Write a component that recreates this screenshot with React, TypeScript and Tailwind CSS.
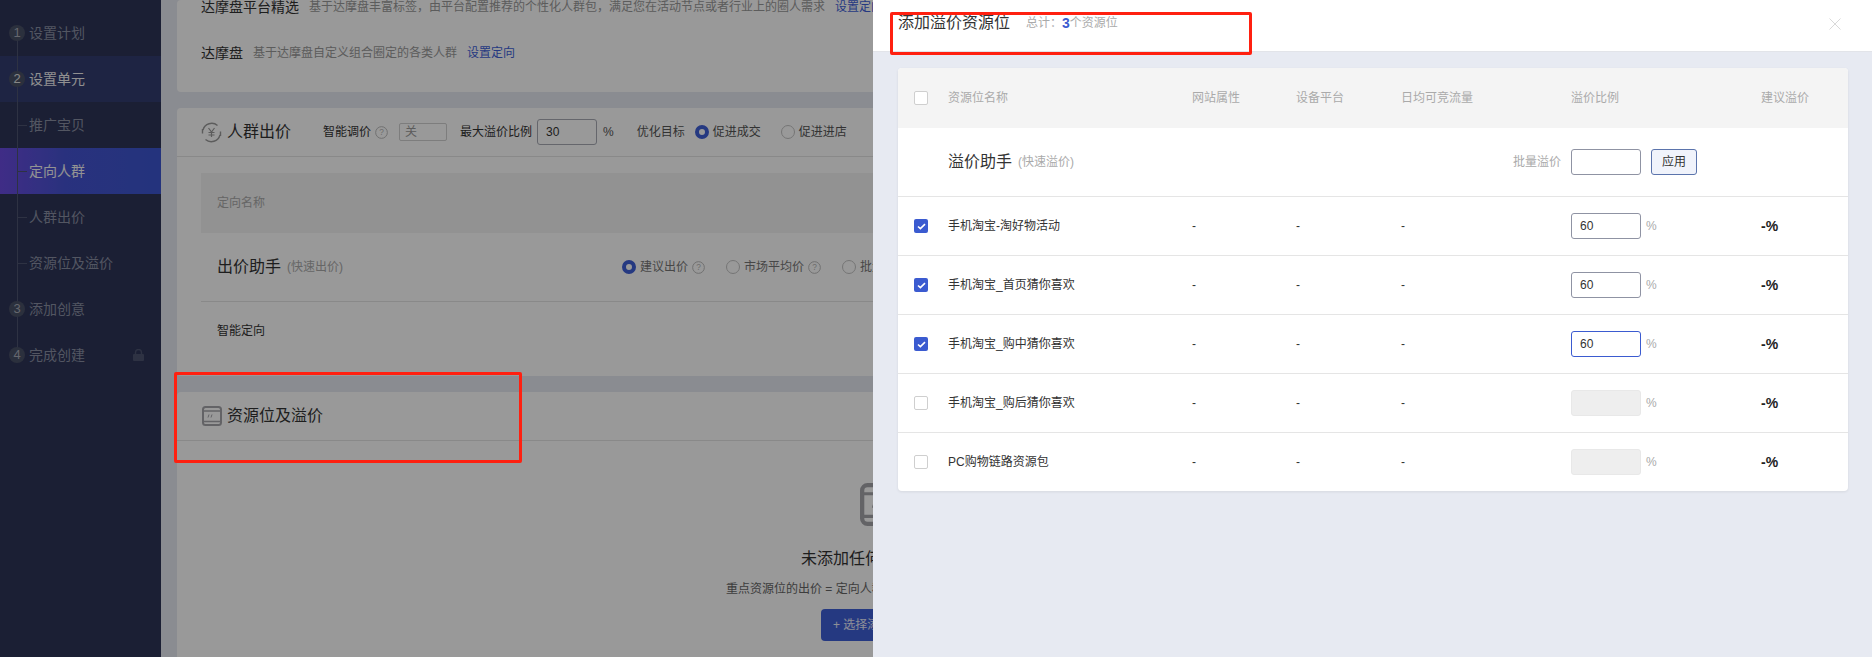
import React from "react";

const Q = ({ s = 13 }: { s?: number }) => (
  <svg width={s} height={s} viewBox="0 0 14 14" fill="none" className="shrink-0">
    <circle cx="7" cy="7" r="6.3" stroke="#b5b5b5" strokeWidth="1" />
    <text x="7" y="10.2" textAnchor="middle" fontSize="9" fill="#b5b5b5" fontFamily="Liberation Sans">?</text>
  </svg>
);

const Radio = ({ on }: { on?: boolean }) =>
  on ? (
    <span className="w-[14px] h-[14px] rounded-full border-[4px] border-[#3f5fd8] bg-white shrink-0" />
  ) : (
    <span className="w-[14px] h-[14px] rounded-full border border-[#c4c4c4] bg-white shrink-0" />
  );

const SlotIcon = ({ s = 20 }: { s?: number }) => (
  <svg width={s} height={s} viewBox="0 0 20 20" fill="none" className="shrink-0">
    <rect x="1" y="1" width="18" height="18" rx="2.5" stroke="#a5a5aa" strokeWidth="2" />
    <path d="M1 5h18M1 15.5h18" stroke="#a5a5aa" strokeWidth="1.5" />
    <path d="M6 11.5l1-3M9 11.5l1-3" stroke="#a5a5aa" strokeWidth="1" />
  </svg>
);

const Check = ({ on }: { on?: boolean }) =>
  on ? (
    <span className="w-[14px] h-[14px] rounded-[2px] bg-[#3b5bd0] flex items-center justify-center">
      <svg width="9" height="7" viewBox="0 0 9 7" fill="none">
        <path d="M1 3.5L3.4 5.6L8 1.2" stroke="white" strokeWidth="1.6" />
      </svg>
    </span>
  ) : (
    <span className="w-[14px] h-[14px] rounded-[2px] border border-[#cfcfcf] bg-white" />
  );

const nav: { n?: string; t: string; kind?: string }[] = [
  { n: "1", t: "设置计划", kind: "dim" },
  { n: "2", t: "设置单元", kind: "cur" },
  { t: "推广宝贝" },
  { t: "定向人群", kind: "active" },
  { t: "人群出价" },
  { t: "资源位及溢价" },
  { n: "3", t: "添加创意" },
  { n: "4", t: "完成创建", kind: "lock" },
];

const Sidebar = () => (
  <aside className="w-[161px] shrink-0 h-full bg-[#2d3557] pt-[10px] relative">
    <div className="absolute left-[17px] top-[33px] h-[322px] w-px bg-[#4d5470] z-10" />
    {nav.map((r) => (
      <div
        key={r.t}
        className={
          "h-[46px] flex items-center text-[14px] relative " +
          (r.kind === "active"
            ? "bg-gradient-to-r from-[#6a4ae0] via-[#4553d2] via-40% to-[#3c56d0] text-[#f5f5f5]"
            : r.kind === "cur"
            ? "bg-[#323c70] text-[#f0f0f0]"
            : "text-[#8a8fa3]")
        }
      >
        {r.n ? (
          <span
            className={
              "absolute left-[9px] z-20 w-[16px] h-[16px] rounded-full bg-[#495066] flex items-center justify-center text-[13px] " +
              (r.kind === "cur" ? "text-[#e0e0e0]" : "text-[#a8acb8]")
            }
          >
            {r.n}
          </span>
        ) : (
          <span className="absolute left-[18px] w-[9px] h-px bg-[#4d5470] z-10" />
        )}
        <span className="ml-[29px]">{r.t}</span>
        {r.kind === "lock" && (
          <svg width="11" height="12" viewBox="0 0 11 12" className="absolute left-[133px] top-[17px]" fill="none">
            <rect x="0" y="5" width="11" height="7" rx="1" fill="#4d5470" />
            <path d="M2.5 5V3.5a3 3 0 016 0V5" stroke="#4d5470" strokeWidth="1.4" />
          </svg>
        )}
      </div>
    ))}
  </aside>
);

const Main = () => (
  <main className="flex-1 min-w-0 h-full bg-[#e7eaf2] pl-[16px] overflow-hidden flex flex-col gap-[16px]">
    <section className="bg-white rounded-[4px] w-[1680px] h-[92px] shrink-0 px-[24px] text-[#333]">
      <div className="h-[14px] flex items-center whitespace-nowrap">
        <span className="text-[14px]">达摩盘平台精选</span>
        <span className="text-[12px] text-[#999] ml-[10px]">基于达摩盘丰富标签，由平台配置推荐的个性化人群包，满足您在活动节点或者行业上的圈人需求</span>
        <span className="text-[12px] text-[#3f5fd8] ml-[10px]">设置定向</span>
      </div>
      <div className="h-[20px] mt-[29px] flex items-center whitespace-nowrap">
        <span className="text-[14px]">达摩盘</span>
        <span className="text-[12px] text-[#999] ml-[10px]">基于达摩盘自定义组合圈定的各类人群</span>
        <span className="text-[12px] text-[#3f5fd8] ml-[10px]">设置定向</span>
      </div>
    </section>

    <section className="bg-white rounded-[4px] w-[1680px] h-[268px] shrink-0 text-[#333]">
      <div className="h-[49px] border-b border-[#e5e5e5] pl-[24px] flex items-center whitespace-nowrap text-[12px]">
        <svg width="21" height="21" viewBox="0 0 21 21" fill="none" className="shrink-0">
          <path d="M16.5 3.5A9 9 0 002 8M4.5 17.5A9 9 0 0019 13" stroke="#999" strokeWidth="1.4" />
          <path d="M1.5 11.5V7M19.5 9.5V14" stroke="#999" strokeWidth="1.4" />
          <path d="M7.5 6l3 4 3-4M7.5 10.5h6M7.5 13h6M10.5 10v5" stroke="#999" strokeWidth="1.2" />
        </svg>
        <span className="text-[16px] ml-[5px] w-[96px]">人群出价</span>
        <span>智能调价</span>
        <span className="ml-[4px]"><Q /></span>
        <span className="ml-[11px] w-[48px] h-[18px] border border-[#d0d0d0] rounded-[2px] pl-[5px] leading-[16px] text-[#999]">关</span>
        <span className="ml-[13px]">最大溢价比例</span>
        <span className="ml-[5px] w-[60px] h-[26px] border border-[#a8abb5] rounded-[3px] pl-[8px] leading-[24px]">30</span>
        <span className="ml-[6px] text-[#555]">%</span>
        <span className="ml-[23px] text-[#555]">优化目标</span>
        <span className="ml-[10px] flex items-center gap-[4px] text-[#555]"><Radio on />促进成交</span>
        <span className="ml-[20px] flex items-center gap-[4px] text-[#555]"><Radio />促进进店</span>
      </div>
      <div className="px-[24px] pt-[16px]">
        <div className="h-[60px] bg-[#f3f3f3] pl-[16px] flex items-center text-[12px] text-[#aaa]">定向名称</div>
        <div className="h-[69px] border-b border-[#e5e5e5] pl-[16px] flex items-center whitespace-nowrap">
          <span className="text-[16px]">出价助手</span>
          <span className="text-[12px] text-[#aaa] ml-[6px]">(快速出价)</span>
          <span className="ml-[279px] flex items-center gap-[4px] text-[12px] text-[#777]"><Radio on />建议出价<Q /></span>
          <span className="ml-[21px] flex items-center gap-[4px] text-[12px] text-[#777]"><Radio />市场平均价<Q /></span>
          <span className="ml-[21px] flex items-center gap-[4px] text-[12px] text-[#777]"><Radio />批量出价</span>
        </div>
        <div className="h-[58px] pl-[16px] flex items-center text-[12px]">智能定向</div>
      </div>
    </section>

    <section className="bg-white rounded-[4px] w-[1680px] h-[300px] shrink-0 text-[#333]">
      <div className="h-[49px] border-b border-[#e5e5e5] pl-[25px] flex items-center">
        <SlotIcon />
        <span className="text-[16px] ml-[5px]">资源位及溢价</span>
      </div>
      <div className="pl-[683px] pt-[42px]"><SlotIcon s={43} /></div>
      <div className="pl-[624px] mt-[21px] text-[16px] whitespace-nowrap">未添加任何资源位</div>
      <div className="pl-[549px] mt-[9px] text-[12px] text-[#666] whitespace-nowrap">重点资源位的出价 = 定向人群出价 × (1 + 资源位溢价)</div>
      <div className="pl-[644px] mt-[11px]">
        <span className="inline-flex items-center h-[32px] px-[12px] rounded-[4px] bg-[#3f5fd8] text-white/90 text-[12px] whitespace-nowrap">+ 选择添加资源位</span>
      </div>
    </section>
  </main>
);

const rows = [
  { n: "手机淘宝-淘好物活动", on: true, v: "60" },
  { n: "手机淘宝_首页猜你喜欢", on: true, v: "60" },
  { n: "手机淘宝_购中猜你喜欢", on: true, v: "60", focus: true },
  { n: "手机淘宝_购后猜你喜欢" },
  { n: "PC购物链路资源包" },
];

const gridCols = "grid grid-cols-[50px_244px_104px_105px_170px_190px_87px] items-center text-[12px]";

const Drawer = () => (
  <div className="absolute top-0 bottom-0 left-[873px] right-0 bg-[#e7eaf2] z-40 flex flex-col">
    <header className="h-[52px] shrink-0 bg-white border-b border-[#e2e4e9] pl-[25px] pr-[31px] flex items-start">
      <span className="text-[16px] leading-[46px] text-[#333]">添加溢价资源位</span>
      <span className="text-[12px] text-[#aaa] leading-[46px] ml-[16px]">总计：</span>
      <span className="text-[14px] font-bold text-[#3b5bd0] leading-[46px]">3</span>
      <span className="text-[12px] text-[#aaa] leading-[46px]">个资源位</span>
      <svg width="12" height="12" viewBox="0 0 12 12" className="ml-auto mt-[18px]" fill="none">
        <path d="M.5.5l11 11M11.5.5l-11 11" stroke="#d9d9d9" strokeWidth="1" />
      </svg>
    </header>
    <div className="mt-[16px] ml-[25px] w-[950px] bg-white rounded-[4px] shadow-[0_1px_3px_rgba(0,0,0,0.08)] overflow-hidden">
      <div className={gridCols + " h-[60px] bg-[#f4f4f4] text-[#aaa]"}>
        <span className="pl-[16px] flex"><Check /></span>
        <span>资源位名称</span>
        <span>网站属性</span>
        <span>设备平台</span>
        <span>日均可竞流量</span>
        <span>溢价比例</span>
        <span>建议溢价</span>
      </div>
      <div className={gridCols + " h-[69px] border-b border-[#e5e5e5]"}>
        <span />
        <div className="col-span-4 flex items-center justify-between pr-[10px]">
          <span className="flex items-center">
            <span className="text-[16px] text-[#333]">溢价助手</span>
            <span className="text-[#aaa] ml-[6px]">(快速溢价)</span>
          </span>
          <span className="text-[#aaa]">批量溢价</span>
        </div>
        <div className="col-span-2 flex items-center gap-[10px]">
          <span className="w-[70px] h-[26px] border border-[#8f93a3] rounded-[3px] bg-white" />
          <span className="w-[46px] h-[26px] border border-[#5b74ac] rounded-[3px] bg-[#f0f3fb] text-[#333] flex items-center justify-center">应用</span>
        </div>
      </div>
      {rows.map((r, i) => (
        <div key={r.n} className={gridCols + " text-[#333] " + (i < rows.length - 1 ? "h-[59px] border-b border-[#e5e5e5]" : "h-[58px]")}>
          <span className="pl-[16px] flex"><Check on={r.on} /></span>
          <span>{r.n}</span>
          <span>-</span>
          <span>-</span>
          <span>-</span>
          <span className="flex items-center">
            {r.v ? (
              <span className={"w-[70px] h-[26px] rounded-[3px] bg-white pl-[8px] leading-[24px] border " + (r.focus ? "border-[#3b5bd0]" : "border-[#8f93a3]")}>{r.v}</span>
            ) : (
              <span className="w-[70px] h-[26px] rounded-[3px] bg-[#eeeeee] border border-[#e8e8e8]" />
            )}
            <span className="ml-[5px] text-[#aaa]">%</span>
          </span>
          <span className="font-bold text-[14px] text-[#222]">-%</span>
        </div>
      ))}
    </div>
  </div>
);

export default function App() {
  return (
    <div className="relative w-[1872px] h-[657px] overflow-hidden flex font-['Liberation_Sans','Noto_Sans_CJK_SC',sans-serif]">
      <Sidebar />
      <Main />
      <div className="absolute inset-0 bg-black/40 z-30" />
      <Drawer />
      <div className="absolute left-[174px] top-[372px] w-[348px] h-[91px] border-[3px] border-[#ff2010] rounded-[2px] z-50" />
      <div className="absolute left-[890px] top-[12px] w-[362px] h-[43px] border-[3px] border-[#ff2010] rounded-[2px] z-50" />
    </div>
  );
}
